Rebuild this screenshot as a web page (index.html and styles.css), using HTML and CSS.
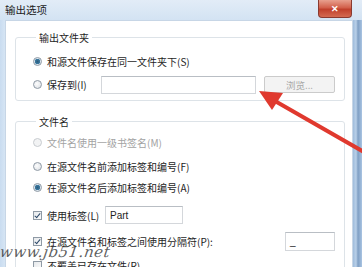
FILE: index.html
```html
<!DOCTYPE html>
<html lang="zh-CN">
<head>
  <meta charset="UTF-8">
  <title>输出选项</title>
  <link rel="stylesheet" href="styles.css">
</head>
<body>
  <div class="window">
    <div class="titlebar">
      <span class="title">输出选项</span>
      <span class="close-btn">&#x2715;</span>
    </div>
    <div class="frame">
      <div class="client">
        <fieldset class="group group-folder">
          <legend>输出文件夹</legend>
          <div class="row row-same">
            <span class="radio checked"></span>
            <span class="label">和源文件保存在同一文件夹下(S)</span>
          </div>
          <div class="row row-saveto">
            <span class="radio"></span>
            <span class="label label-saveto">保存到(I)</span>
            <span class="textbox textbox-path"></span>
            <span class="btn-browse">浏览...</span>
          </div>
        </fieldset>

        <fieldset class="group group-name">
          <legend>文件名</legend>
          <div class="row row-first disabled">
            <span class="radio"></span>
            <span class="label">文件名使用一级书签名(M)</span>
          </div>
          <div class="row row-before">
            <span class="radio"></span>
            <span class="label">在源文件名前添加标签和编号(F)</span>
          </div>
          <div class="row row-after">
            <span class="radio checked"></span>
            <span class="label">在源文件名后添加标签和编号(A)</span>
          </div>
          <div class="row row-tag">
            <span class="checkbox checked"></span>
            <span class="label label-tag">使用标签(L)</span>
            <span class="textbox textbox-tag">Part</span>
          </div>
          <div class="row row-sep">
            <span class="checkbox checked"></span>
            <span class="label label-sep">在源文件名和标签之间使用分隔符(P):</span>
            <span class="textbox textbox-sep">_</span>
          </div>
          <div class="row row-last">
            <span class="checkbox"></span>
            <span class="label">不覆盖已存在文件(R)</span>
          </div>
        </fieldset>
      </div>
    </div>
  </div>

  <svg class="arrow" width="362" height="267" viewBox="0 0 362 267">
    <line x1="268" y1="97" x2="364" y2="152" stroke="#e0392e" stroke-width="4" stroke-linecap="round"/>
    <polygon points="259,91 283,93 272,110" fill="#e0392e"/>
  </svg>

  <div class="watermark">www.jb51.net</div>
</body>
</html>
```

FILE: styles.css
```css
/* Page */
body {
  margin: 0;
  width: 362px;
  height: 267px;
  overflow: hidden;
  position: relative;
  font-family: "Noto Sans CJK SC", "Noto Sans", sans-serif;
  font-size: 10px;
  color: #1e1e1e;
  background: #bcd3ea;
}

/* Window chrome */
.window {
  height: 267px;
  display: flex;
  flex-direction: column;
  background: linear-gradient(90deg, #c9dcf0 0, #d6e5f4 5px, #d6e5f4 352px, #9fbcdc 353px, #b9d0e8 356px, #7f9fc4 358px, #a9c4e2 362px);
}
.titlebar {
  height: 20px;
  display: flex;
  justify-content: space-between;
  align-items: flex-start;
  padding-left: 5px;
  padding-right: 10px;
  background: linear-gradient(180deg, #e2ecf7 0%, #d3e3f3 100%);
}
.title {
  font-size: 10.5px;
  line-height: 20px;
  color: #1a1a1a;
}
.close-btn {
  width: 34px;
  height: 18px;
  line-height: 18px;
  text-align: center;
  color: #fff;
  font-size: 9px;
  font-weight: bold;
  border: 1px solid #8a3a30;
  border-top: none;
  border-radius: 0 0 4px 4px;
  background: linear-gradient(180deg, #e8a08e 0%, #d2604b 45%, #c0402c 55%, #d46a52 100%);
  box-sizing: border-box;
}
.frame {
  flex: 1;
  min-height: 0;
  padding: 0 9px 0 5px;
}
.client {
  height: 100%;
  overflow: hidden;
  background: #fff;
  border: 1px solid #c7d6e6;
  border-bottom: none;
  box-sizing: border-box;
  padding: 10px 7px 0 9px;
}

/* Group boxes */
.group {
  margin: 0;
  border: 1px solid #dde3e8;
  border-radius: 3px;
  padding: 0 0 0 17px;
}
.group legend {
  padding: 0 3px;
  margin-left: 3px;
  line-height: 13px;
  font-size: 10px;
}
.group-folder {
  height: 70px;
  box-sizing: border-box;
  padding-top: 6px;
}
.group-name {
  margin-top: 14px;
  padding-top: 4px;
}

/* Rows */
.row {
  display: flex;
  align-items: center;
  height: 23px;
}
.row-first,
.row-before,
.row-after,
.row-tag,
.row-sep,
.row-last { height: 20px; }
.row-before { margin-top: 4px; }
.row-after { margin-top: 1px; }
.row-tag { margin-top: 8px; }
.row-sep { margin-top: 6px; }
.row-last { margin-top: 4px; }
.label {
  margin-left: 5px;
  white-space: nowrap;
}
.disabled .label { color: #a3a3a3; }
.label-saveto { width: 54px; }
.label-tag { width: 58px; }
.label-sep { width: 238px; }

/* Radio and check boxes */
.radio {
  width: 9px;
  height: 9px;
  border-radius: 50%;
  border: 1px solid #8f9aa5;
  box-sizing: border-box;
  background: radial-gradient(circle at 40% 40%, #fdfdfd 0, #e3e6ea 70%);
  flex-shrink: 0;
}
.radio.checked {
  background: radial-gradient(circle, #2c5a7a 0, #3d7ca3 2.5px, #d9e4ee 3px, #eef2f5 100%);
}
.disabled .radio {
  border-color: #c8ccd0;
  background: #f2f3f4;
}
.checkbox {
  width: 9px;
  height: 9px;
  border: 1px solid #8f9aa5;
  box-sizing: border-box;
  background: linear-gradient(135deg, #e6e9ec, #fafafa);
  flex-shrink: 0;
  position: relative;
}
.checkbox.checked::after {
  content: "";
  position: absolute;
  left: 2px;
  top: 0;
  width: 2px;
  height: 5px;
  border: solid #2d4a6a;
  border-width: 0 1.5px 1.5px 0;
  transform: rotate(40deg);
}

/* Inputs */
.textbox {
  display: block;
  height: 18px;
  line-height: 17px;
  border: 1px solid #d4d7db;
  border-top-color: #b9bec4;
  box-sizing: border-box;
  padding-left: 4px;
  font-family: "Liberation Sans", Arial, sans-serif;
  font-size: 10px;
  background: #fff;
}
.textbox-path {
  width: 155px;
}
.btn-browse {
  width: 71px;
  height: 17px;
  line-height: 16px;
  margin-left: 8px;
  text-align: center;
  color: #a6a6a6;
  border: 1px solid #cbcbcb;
  border-radius: 2px;
  background: #f3f3f3;
  box-sizing: border-box;
  font-size: 9.5px;
}
.textbox-tag {
  width: 78px;
}
.textbox-sep {
  width: 50px;
  height: 19px;
}

/* Overlays */
.arrow {
  position: absolute;
  left: 0;
  top: 0;
  pointer-events: none;
}
.watermark {
  position: absolute;
  left: 0;
  top: 243px;
  font-family: "DejaVu Serif", serif;
  font-style: italic;
  font-size: 15px;
  letter-spacing: 0.5px;
  color: rgba(40, 40, 40, 0.75);
  transform: skewX(-8deg);
}
```
